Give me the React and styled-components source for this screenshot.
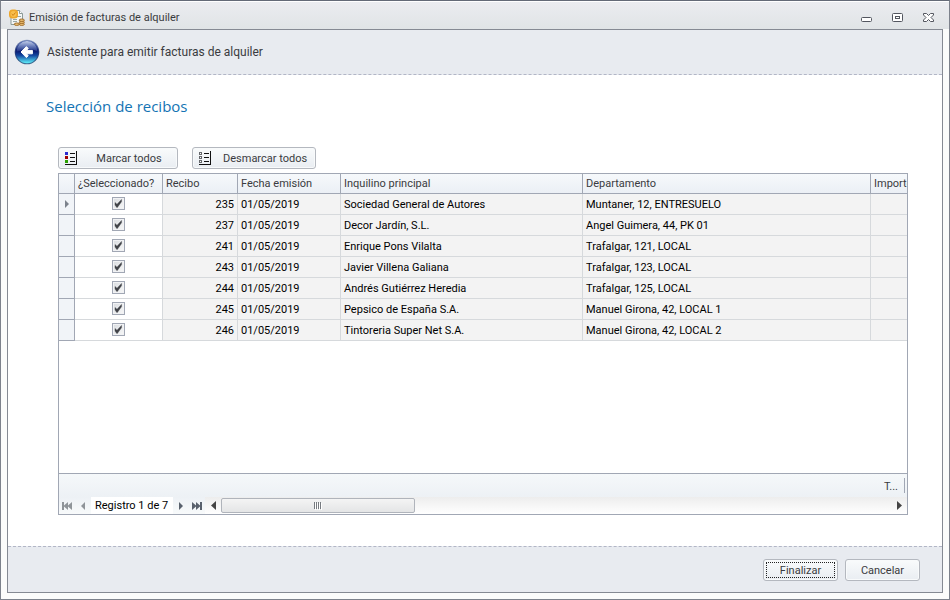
import React, { useState } from 'react'
import styled, { createGlobalStyle, css } from 'styled-components'

const rows = [
  { id: 235, date: '01/05/2019', tenant: 'Sociedad General de Autores', unit: 'Muntaner, 12, ENTRESUELO' },
  { id: 237, date: '01/05/2019', tenant: 'Decor Jardín, S.L.', unit: 'Angel Guimera, 44, PK 01' },
  { id: 241, date: '01/05/2019', tenant: 'Enrique Pons Vilalta', unit: 'Trafalgar, 121, LOCAL' },
  { id: 243, date: '01/05/2019', tenant: 'Javier Villena Galiana', unit: 'Trafalgar, 123, LOCAL' },
  { id: 244, date: '01/05/2019', tenant: 'Andrés Gutiérrez Heredia', unit: 'Trafalgar, 125, LOCAL' },
  { id: 245, date: '01/05/2019', tenant: 'Pepsico de España S.A.', unit: 'Manuel Girona, 42, LOCAL 1' },
  { id: 246, date: '01/05/2019', tenant: 'Tintoreria Super Net S.A.', unit: 'Manuel Girona, 42, LOCAL 2' },
]

export default function App() {
  const [checked, setChecked] = useState(rows.map(r => r.id))
  const toggle = id =>
    setChecked(checked.includes(id) ? checked.filter(c => c !== id) : [...checked, id])

  return (
    <Window>
      <GlobalStyle />
      <TitleBar>
        <InvoiceIcon />
        <WindowTitle>Emisión de facturas de alquiler</WindowTitle>
        <WindowControls>
          <ControlButton aria-label="Minimizar"><MinimizeIcon /></ControlButton>
          <ControlButton aria-label="Maximizar"><MaximizeIcon /></ControlButton>
          <ControlButton aria-label="Cerrar"><CloseIcon /></ControlButton>
        </WindowControls>
      </TitleBar>
      <Client>
        <Header>
          <BackButton aria-label="Atrás"><BackIcon /></BackButton>
          <WizardTitle>Asistente para emitir facturas de alquiler</WizardTitle>
        </Header>
        <Page>
          <PageTitle>Selección de recibos</PageTitle>
          <Toolbar>
            <ToolButton onClick={() => setChecked(rows.map(r => r.id))}>
              <ListIcon colors={['#2b2bd0', '#a00000', '#2ba000']} />
              <ToolLabel>Marcar todos</ToolLabel>
            </ToolButton>
            <ToolButton onClick={() => setChecked([])}>
              <ListIcon />
              <ToolLabel>Desmarcar todos</ToolLabel>
            </ToolButton>
          </Toolbar>
          <Grid>
            <GridView>
              <Table>
                <colgroup>
                  <Col $width={16} />
                  <Col $width={88} />
                  <Col $width={75} />
                  <Col $width={103} />
                  <Col $width={242} />
                  <Col $width={288} />
                  <Col $width={90} />
                </colgroup>
                <thead>
                  <tr>
                    <HeadCell aria-label="Fila actual" />
                    <HeadCell>¿Seleccionado?</HeadCell>
                    <HeadCell>Recibo</HeadCell>
                    <HeadCell>Fecha emisión</HeadCell>
                    <HeadCell>Inquilino principal</HeadCell>
                    <HeadCell>Departamento</HeadCell>
                    <HeadCell>Importe</HeadCell>
                  </tr>
                </thead>
                <tbody>
                  {rows.map((row, i) =>
                    <tr key={row.id}>
                      <IndicatorCell>{i === 0 && <Arrow color="#7c828c" />}</IndicatorCell>
                      <CheckCell>
                        <CheckWrap>
                          <CheckBox
                            aria-label={`Recibo ${row.id}`}
                            checked={checked.includes(row.id)}
                            onChange={() => toggle(row.id)}
                          />
                          {checked.includes(row.id) && <CheckMark />}
                        </CheckWrap>
                      </CheckCell>
                      <Cell $right>{row.id}</Cell>
                      <Cell>{row.date}</Cell>
                      <Cell>{row.tenant}</Cell>
                      <Cell>{row.unit}</Cell>
                      <Cell />
                    </tr>
                  )}
                </tbody>
              </Table>
            </GridView>
            <Summary><SummaryItem>T...</SummaryItem></Summary>
            <NavBar>
              <NavGroup>
                <NavButton disabled aria-label="Primero"><Skip color="#8f9499" flip /></NavButton>
                <NavButton disabled aria-label="Anterior"><Arrow color="#8f9499" flip /></NavButton>
              </NavGroup>
              <RecordLabel>Registro 1 de 7</RecordLabel>
              <NavGroup>
                <NavButton aria-label="Siguiente"><Arrow color="#59616d" /></NavButton>
                <NavButton aria-label="Último"><Skip color="#59616d" /></NavButton>
              </NavGroup>
              <ScrollBar>
                <ScrollButton aria-label="Desplazar a la izquierda"><ScrollArrow flip /></ScrollButton>
                <Track><Thumb><Grip /></Thumb></Track>
                <ScrollButton aria-label="Desplazar a la derecha"><ScrollArrow /></ScrollButton>
              </ScrollBar>
            </NavBar>
          </Grid>
        </Page>
        <Footer>
          <Button $focused>Finalizar</Button>
          <Button>Cancelar</Button>
        </Footer>
      </Client>
    </Window>
  )
}

const flipped = (flip, width) => flip ? `translate(${width} 0) scale(-1 1)` : undefined

const Arrow = ({ color, flip }) =>
  <svg width="4" height="8" viewBox="0 0 4 8" aria-hidden="true">
    <path d="M0 0L4 4L0 8z" fill={color} transform={flipped(flip, 4)} />
  </svg>

const Skip = ({ color, flip }) =>
  <svg width="10" height="8" viewBox="0 0 10 8" aria-hidden="true">
    <path d="M0 0L4 3.5V0L8 3.5V0H10V8H8V4.5L4 8V4.5L0 8z" fill={color} transform={flipped(flip, 10)} />
  </svg>

const ScrollArrow = ({ flip }) =>
  <svg width="5" height="9" viewBox="0 0 5 9" aria-hidden="true">
    <path d="M0 0L5 4.5L0 9z" fill="#444" transform={flipped(flip, 5)} />
  </svg>

const Grip = () =>
  <svg width="8" height="8" viewBox="0 0 8 8" aria-hidden="true">
    <path d="M.5 0V7M2.5 0V7M4.5 0V7M6.5 0V7" stroke="#777b80" />
    <path d="M1.5 1V8M3.5 1V8M5.5 1V8M7.5 1V8" stroke="#fff" />
  </svg>

const MinimizeIcon = () =>
  <svg width="11" height="11" viewBox="0 0 11 11" aria-hidden="true">
    <rect x=".5" y="5.5" width="10" height="4" rx="1" fill="#fff" stroke="#53565f" />
  </svg>

const MaximizeIcon = () =>
  <svg width="11" height="11" viewBox="0 0 11 11" aria-hidden="true">
    <rect x=".5" y="1.5" width="10" height="8" rx="1" fill="#fff" stroke="#53565f" />
    <rect x="3.5" y="4.5" width="4" height="2" fill="#fff" stroke="#53565f" />
  </svg>

const CloseIcon = () =>
  <svg width="11" height="11" viewBox="0 0 11 11" aria-hidden="true">
    <path
      d="M.5 1.5H3.5L5.5 3.5L7.5 1.5H10.5V3L8 5.5L10.5 8V9.5H7.5L5.5 7.5L3.5 9.5H.5V8L3 5.5L.5 3z"
      fill="#fff"
      stroke="#53565f"
    />
  </svg>

const CheckMark = () =>
  <CheckSvg width="13" height="13" viewBox="0 0 13 13" aria-hidden="true">
    <path d="M3 5.5L5 7.2L9.5 2.5V4.8L5.3 10.5H4.8L3 8z" fill="#404247" stroke="#404247" strokeWidth=".4" />
  </CheckSvg>

const ListIcon = ({ colors }) =>
  <svg width="12" height="14" viewBox="0 0 12 14" aria-hidden="true">
    {[0, 4, 8].map((y, i) => colors
      ? <rect key={y} x="0" y={y + 1} width="3" height="3" fill={colors[i]} />
      : <rect key={y} x=".5" y={y + 1.5} width="2" height="2" fill="#fff" stroke="#66686c" />
    )}
    <path d="M5 2.5H10M5 6.5H10M5 10.5H10M0 13.5H12M11.5 0V14" stroke="#111" />
  </svg>

const InvoiceIcon = () =>
  <svg width="16" height="17" viewBox="0 0 16 17" aria-hidden="true">
    <path d="M2 1.5H10.5L13.5 4.5V15.5H2z" fill="#f4f6f5" stroke="#8c9a98" />
    <path d="M10.5 1.5V4.5H13.5" fill="#fff" stroke="#8c9a98" />
    <path d="M8 7.5H12M4 10.5H8M4 12.5H8" stroke="#9aa8a6" />
    <rect x="0" y=".5" width="9" height="9" rx="3.5" fill="#eda62b" />
    <circle cx="4.5" cy="5" r="3" fill="#f8bf4d" />
    <path d="M2.7 5L4.2 6.4L6.5 3.5" fill="none" stroke="#d07f14" />
    <g fill="#f0c67a" stroke="#99631f" strokeWidth=".9">
      <ellipse cx="7.8" cy="15.2" rx="2.6" ry="1.2" />
      <ellipse cx="12.8" cy="15.2" rx="2.6" ry="1.2" />
      <ellipse cx="12.8" cy="13.2" rx="2.6" ry="1.2" />
      <ellipse cx="12.8" cy="11.2" rx="2.6" ry="1.2" />
    </g>
  </svg>

const BackIcon = () =>
  <svg width="26" height="26" viewBox="0 0 26 26" aria-hidden="true">
    <defs>
      <linearGradient id="rim" x1="0" y1="0" x2="0" y2="1">
        <stop offset="0" stopColor="#8d9bc0" />
        <stop offset=".5" stopColor="#1f3478" />
        <stop offset="1" stopColor="#3f6f94" />
      </linearGradient>
      <linearGradient id="ball" x1="0" y1="0" x2="0" y2="1">
        <stop offset="0" stopColor="#3f5fb2" />
        <stop offset=".45" stopColor="#08186e" />
        <stop offset=".65" stopColor="#1246a0" />
        <stop offset="1" stopColor="#5ff0fa" />
      </linearGradient>
      <linearGradient id="shine" x1="0" y1="0" x2="0" y2="1">
        <stop offset="0" stopColor="#fff" stopOpacity=".7" />
        <stop offset="1" stopColor="#7f9cdc" stopOpacity=".2" />
      </linearGradient>
    </defs>
    <circle cx="13" cy="13" r="12.3" fill="url(#rim)" />
    <circle cx="13" cy="13" r="11.2" fill="url(#ball)" />
    <path d="M2.5 12.5A10.5 10.5 0 0 1 23.5 12.5Q18 9.5 13 10.5T2.5 12.5z" fill="url(#shine)" />
    <path d="M7 13L12.4 7.6L14.2 9.4L12.6 11.4H18.4V14.8H12.6L14.2 16.8L12.4 18.6z" fill="#fff" stroke="#fff" strokeLinejoin="round" />
  </svg>

const GlobalStyle = createGlobalStyle`
  * {
    box-sizing: border-box;
  }
  body {
    margin: 0;
    background: #fff;
  }
  body, button, input {
    font-family: Roboto, "Noto Sans", sans-serif;
    font-size: 11px;
    line-height: 14px;
    color: #3a3b40;
  }
  svg {
    display: block;
    flex: none;
  }
`
const Window = styled.div`
  display: flex;
  flex-direction: column;
  height: 100vh;
  min-height: 480px;
  border: 1px solid #7d828c;
  border-top-color: #646a77;
  background: #fbfcfb;
`
const TitleBar = styled.header`
  display: flex;
  align-items: center;
  flex: none;
  gap: 4px;
  height: 28px;
  padding: 4px 15px 0 8px;
  border-top: 1px solid #fff;
  background: linear-gradient(#ebecf0, #e0e4e6);
`
const WindowTitle = styled.h1`
  margin: 0;
  font-size: 11px;
  font-weight: 400;
  line-height: 16px;
`
const WindowControls = styled.div`
  display: flex;
  gap: 20px;
  margin-left: auto;
`
const bareButton = css`
  display: flex;
  align-items: center;
  justify-content: center;
  padding: 0;
  border: 0;
  background: none;
`
const ControlButton = styled.button`
  ${bareButton}
`
const Client = styled.main`
  display: flex;
  flex-direction: column;
  flex: 1;
  min-height: 0;
  margin: 0 6px 6px;
  border: 1px solid #858a93;
  background: #fff;
`
const Header = styled.div`
  display: flex;
  align-items: center;
  flex: none;
  gap: 7px;
  height: 45px;
  padding: 0 6px;
  border-bottom: 1px dashed #b2b6c6;
  background: #e8ebf0;
`
const BackButton = styled.button`
  ${bareButton}
`
const WizardTitle = styled.h2`
  margin: 0;
  font-size: 12px;
  font-weight: 400;
`
const Page = styled.section`
  display: flex;
  flex-direction: column;
  flex: 1;
  min-height: 0;
  padding: 20px 34px 31px 38px;
`
const PageTitle = styled.h3`
  margin: 0 0 30px;
  color: #1474b4;
  font-family: "Open Sans", "Noto Sans", sans-serif;
  font-size: 15px;
  font-weight: 400;
  line-height: 22px;
`
const Toolbar = styled.div`
  display: flex;
  gap: 14px;
  margin: 0 0 4px 12px;
`
const buttonFace = css`
  height: 22px;
  padding: 2px 6px 0;
  border: 1px solid #b4b8bf;
  border-radius: 3px;
  background: linear-gradient(#f9fbfc, #e9edf2);
  box-shadow: inset 0 0 0 1px #f8fafb;
`
const ToolButton = styled.button`
  ${buttonFace}
  display: flex;
  align-items: center;
  min-width: 120px;
  padding: 0 8px 0 6px;
`
const ToolLabel = styled.span`
  flex: 1;
  padding-top: 2px;
  margin-left: 12px;
  text-align: center;
  white-space: nowrap;
`
const Grid = styled.div`
  display: flex;
  flex-direction: column;
  flex: 1;
  min-height: 0;
  margin-left: 12px;
  border: 1px solid #a1a7b4;
`
const GridView = styled.div`
  flex: 1;
  min-height: 0;
  overflow: hidden;
`
const Table = styled.table`
  width: 902px;
  table-layout: fixed;
  border-collapse: separate;
  border-spacing: 0;
`
const Col = styled.col`
  width: ${({ $width }) => $width}px;
`
const HeadCell = styled.th`
  height: 20px;
  padding: 1px 3px 0;
  border-right: 1px solid #a1a7b4;
  border-bottom: 1px solid #a1a7b4;
  background: linear-gradient(#f6f9fb, #ebeff5);
  font-weight: 400;
  text-align: left;
  white-space: nowrap;
`
const Cell = styled.td`
  height: 21px;
  padding: 2px 3px 0;
  border-right: 1px solid #d6d9dc;
  border-bottom: 1px solid #d6d9dc;
  background: #f3f3f3;
  color: #000;
  text-align: ${({ $right }) => $right ? 'right' : 'left'};
  white-space: nowrap;
`
const CheckCell = styled(Cell)`
  padding: 0 3px 1px;
  background: #fff;
`
const IndicatorCell = styled(Cell)`
  padding: 0 0 0 6px;
  border-color: #a1a7b4;
  background: #f1f4f8;
`
const CheckWrap = styled.div`
  position: relative;
  width: 13px;
  height: 13px;
  margin: 0 auto;
`
const CheckBox = styled.input.attrs({ type: 'checkbox' })`
  display: block;
  appearance: none;
  width: 13px;
  height: 13px;
  margin: 0;
  border: 1px solid #a1a7b4;
  background: linear-gradient(135deg, #d9dce0, #f8f8f8);
  box-shadow: inset 0 0 0 1px #f1f2f4;
`
const CheckSvg = styled.svg`
  position: absolute;
  top: 0;
  left: 0;
  pointer-events: none;
`
const Summary = styled.div`
  display: flex;
  justify-content: flex-end;
  flex: none;
  height: 24px;
  padding: 4px 2px;
  border-top: 1px solid #a1a7b4;
  background: linear-gradient(#f5f8fa, #edf1f5);
`
const SummaryItem = styled.span`
  padding-right: 6px;
  border-right: 1px solid #a1a7b4;
  line-height: 18px;
`
const NavBar = styled.div`
  display: flex;
  flex: none;
  height: 17px;
`
const NavGroup = styled.div`
  display: flex;
  background: linear-gradient(#edf1f5, #f8fafb);
`
const NavButton = styled.button`
  ${bareButton}
  width: 16px;
`
const RecordLabel = styled.span`
  min-width: 82px;
  padding: 0 4px;
  color: #000;
  line-height: 18px;
  white-space: nowrap;
`
const ScrollBar = styled.div`
  display: flex;
  flex: 1;
  background: linear-gradient(#ededed, #fff);
`
const ScrollButton = styled.button`
  ${bareButton}
  width: 16px;
`
const Track = styled.div`
  flex: 1;
  padding-top: 1px;
`
const Thumb = styled.div`
  display: flex;
  align-items: center;
  justify-content: center;
  width: 29%;
  height: 15px;
  border: 1px solid #b0b4bb;
  border-radius: 2px;
  background: linear-gradient(#f4f4f4, #e4e5e6);
`
const Footer = styled.footer`
  display: flex;
  align-items: center;
  justify-content: flex-end;
  flex: none;
  gap: 7px;
  height: 46px;
  padding: 0 22px;
  border-top: 1px dashed #b2b6c6;
  background: #e8ebf0;
`
const Button = styled.button`
  ${buttonFace}
  width: 75px;
  outline: ${({ $focused }) => $focused ? '1px dotted #222' : 'none'};
  outline-offset: -4px;
`
